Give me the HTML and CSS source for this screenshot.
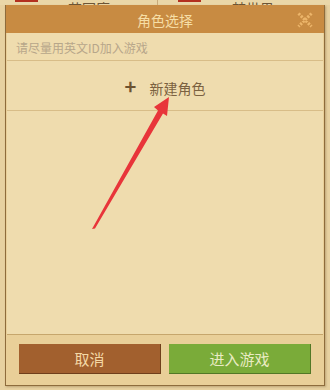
FILE: index.html
```html
<!DOCTYPE html>
<html lang="zh-CN">
<head>
  <meta charset="UTF-8" />
  <meta name="viewport" content="width=device-width, initial-scale=1.0" />
  <title>角色选择</title>
  <link rel="stylesheet" href="styles.css">
</head>
<body>
  <!-- tabs behind the dialog, mostly hidden -->
  <div class="tab-strip">
    <div class="tab">
      <span class="tab-flag"></span>
      <span class="tab-name">花园庭</span>
    </div>
    <div class="tab">
      <span class="tab-flag"></span>
      <span class="tab-name">梦世界</span>
    </div>
  </div>

  <div class="dialog">
    <div class="dialog-header">
      <h2 class="dialog-title">角色选择</h2>
      <svg class="close-btn" width="16" height="16" viewBox="0 0 16 16">
        <path d="M1.5 1.5 L14.5 14.5 M14.5 1.5 L1.5 14.5" stroke="#ecb56a" stroke-width="3" stroke-dasharray="2.2 1.2" fill="none"/>
      </svg>
    </div>

    <div class="dialog-body">
      <p class="hint">请尽量用英文ID加入游戏</p>
      <div class="new-role">
        <span class="plus">+</span>
        <span>新建角色</span>
      </div>

      <!-- annotation arrow -->
      <svg class="arrow" width="330" height="390" viewBox="0 0 330 390">
        <polygon points="169,97 154,107 158,110.5 92,229 95,228.5 163,113.5 167,116" fill="#e8353a"/>
      </svg>
    </div>

    <div class="dialog-footer">
      <button class="btn btn-cancel">取消</button>
      <button class="btn btn-enter">进入游戏</button>
    </div>
  </div>
</body>
</html>
```

FILE: styles.css
```css
body {
  margin: 0;
  padding: 0;
  background-color: #e7d1a0;
  font-family: "Noto Sans CJK SC", "Noto Sans", sans-serif;
  width: 330px;
  height: 390px;
  overflow: hidden;
  position: relative;
}
.tab-strip {
  display: flex;
  height: 5px;
  overflow: hidden;
  background: #ead7a8;
}
.tab {
  width: 157px;
  display: flex;
  align-items: flex-end;
  border-right: 1px solid #c9ab7a;
  position: relative;
}
.tab-flag {
  position: absolute;
  left: 15px;
  top: 0;
  width: 23px;
  height: 2px;
  background: #b3301f;
}
.tab-name {
  margin-left: 68px;
  margin-bottom: -10px;
  font-size: 14px;
  line-height: 14px;
  color: #6d5535;
}
.tab:last-child {
  border-right: none;
}
.tab:last-child .tab-flag {
  left: 20px;
}
.tab:last-child .tab-name {
  margin-left: 74px;
}

.dialog {
  margin-left: 5px;
  width: 318px;
  border: 1px solid #8e6c3c;
  border-top: none;
  background: #e9cf98;
  box-shadow: 1px 1px 2px rgba(90, 60, 20, 0.3);
}
.dialog-header {
  height: 28px;
  padding-top: 2px;
  box-sizing: border-box;
  background: #c88b42;
  display: flex;
  align-items: center;
  justify-content: center;
  position: relative;
}
.dialog-title {
  margin: 0;
  font-size: 14px;
  font-weight: normal;
  color: #f6dea6;
}
.close-btn {
  position: absolute;
  right: 11px;
  top: 7px;
}
.dialog-body {
  height: 301px;
  margin: 0 1px;
  background: #efdcae;
  border-bottom: 1px solid #c6a66c;
}
.hint {
  margin: 0;
  height: 28px;
  padding-left: 9px;
  padding-top: 1px;
  box-sizing: border-box;
  display: flex;
  align-items: center;
  font-size: 12px;
  color: #b7a68a;
  border-bottom: 1px solid #d8bd88;
}
.new-role {
  height: 50px;
  padding-top: 4px;
  box-sizing: border-box;
  display: flex;
  align-items: center;
  justify-content: center;
  gap: 13px;
  padding-left: 0;
  font-size: 14px;
  color: #7b6140;
  border-bottom: 1px solid #d8bd88;
}
.plus {
  font-size: 20px;
  font-weight: bold;
  color: #6c5230;
  line-height: 20px;
  margin-top: -3px;
}
.arrow {
  position: absolute;
  left: 0;
  top: 0;
  pointer-events: none;
}
.dialog-footer {
  height: 50px;
  display: flex;
  gap: 8px;
  padding: 9px 0 0 13px;
  box-sizing: border-box;
}
.btn {
  width: 142px;
  height: 30px;
  border: none;
  font-family: inherit;
  font-size: 15px;
  cursor: pointer;
}
.btn-cancel {
  background: #a2602e;
  color: #f4d9a6;
  border-bottom: 1px solid #6f3f1b;
  border-right: 1px solid #6f3f1b;
}
.btn-enter {
  background: #7aab39;
  color: #eaebc4;
  border-bottom: 1px solid #527826;
  border-right: 1px solid #527826;
}
```
